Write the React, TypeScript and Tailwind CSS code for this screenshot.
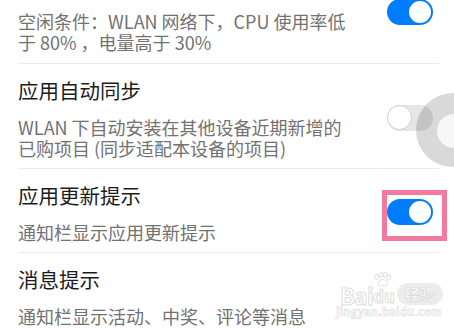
import React from "react";

function Toggle({ on }: { on: boolean }) {
  return on ? (
    <span className="flex h-[26px] w-[46px] items-center justify-end rounded-full bg-[#007dff] px-[2px]">
      <span className="h-[22px] w-[22px] rounded-full bg-white" />
    </span>
  ) : (
    <span className="flex h-[26px] w-[46px] items-center rounded-full bg-[#e6e6e6]">
      <span className="h-[25px] w-[25px] rounded-full border border-[#cfcfcf] bg-white" />
    </span>
  );
}

function Lines({ lines }: { lines: string[] }) {
  return (
    <div className="text-[18px] leading-[21px] text-[#727272]">
      {lines.map((l) => (
        <div key={l} className="whitespace-nowrap">
          {l}
        </div>
      ))}
    </div>
  );
}

function Row({
  title,
  lines,
  on,
  highlight,
}: {
  title: string;
  lines: string[];
  on?: boolean;
  highlight?: boolean;
}) {
  return (
    <div className="flex items-center border-b border-[#ebebeb] pt-[12px] pb-[9px]">
      <div className="flex flex-1 flex-col gap-[13px]">
        <div className="text-[20.5px] leading-[28px] text-[#1c1c1c]">{title}</div>
        <Lines lines={lines} />
      </div>
      {on !== undefined && (
        <div className="relative mr-[6px] flex">
          {highlight && (
            <span className="absolute -left-[5px] -top-[9px] h-[51px] w-[65px] border-[5px] border-[#f27a9e]" />
          )}
          <Toggle on={on} />
        </div>
      )}
    </div>
  );
}

function Paw() {
  return (
    <svg width="19" height="15" viewBox="0 0 19 15" className="absolute -top-[15px] left-[0px]">
      <g fill="#fff" stroke="#dedede" strokeWidth="1">
        <ellipse cx="4" cy="5" rx="2" ry="2.6" />
        <ellipse cx="8" cy="2.8" rx="2" ry="2.4" />
        <ellipse cx="12" cy="2.8" rx="2" ry="2.4" />
        <ellipse cx="15.5" cy="5.5" rx="2" ry="2.6" />
        <path d="M5 12.5c0-3 2.4-5 4.8-5s4.6 2 4.6 5c0 1.5-1.4 2-2.4 1.5-1.3-.6-3.2-.6-4.4 0C6.4 14.5 5 14 5 12.5z" />
      </g>
    </svg>
  );
}

function Watermark() {
  return (
    <div className="pointer-events-none absolute left-[340px] top-[283px] flex select-none flex-col items-start">
      <div className="flex items-end">
        <span className="text-[22px] font-bold leading-[20px] tracking-tight text-white [-webkit-text-stroke:1px_#dedede]">
          Bai
        </span>
        <span className="relative text-[17px] font-bold leading-[18px] text-white [-webkit-text-stroke:1px_#dedede]">
          <Paw />
          du
        </span>
        <span className="ml-[2px] rounded-full bg-[#ececec] px-[8px] text-[15px] font-bold leading-[22px] text-white [-webkit-text-stroke:0.6px_#d8d8d8]">
          经验
        </span>
      </div>
      <span className="-ml-[4px] text-[11px] font-bold leading-[12px] tracking-[0.3px] text-white [-webkit-text-stroke:0.6px_#dcdcdc]">
        jingyan.baidu.com
      </span>
    </div>
  );
}

export default function App() {
  return (
    <div
      className="relative h-[330px] w-[454px] overflow-hidden bg-white"
      style={{ fontFamily: '"Noto Sans CJK SC", "Noto Sans", sans-serif' }}
    >
      <div className="ml-[18px] mr-[15px]">
        {/* first row is scrolled, only its summary shows */}
        <div className="flex items-start border-b border-[#ebebeb]">
          <div className="flex-1 pt-[11px] pb-[10px]">
            <Lines lines={["空闲条件：WLAN 网络下，CPU 使用率低", "于 80% ，电量高于 30%"]} />
          </div>
          <div className="mr-[6px] -mt-[1px] flex">
            <Toggle on />
          </div>
        </div>
        <Row
          title="应用自动同步"
          lines={["WLAN 下自动安装在其他设备近期新增的", "已购项目 (同步适配本设备的项目)"]}
          on={false}
        />
        <Row title="应用更新提示" lines={["通知栏显示应用更新提示"]} on highlight />
        <Row title="消息提示" lines={["通知栏显示活动、中奖、评论等消息"]} />
      </div>

      {/* touch ripple */}
      <span className="pointer-events-none absolute left-[416px] top-[93px] h-[74px] w-[74px] rounded-full bg-black/15" />
      <span className="pointer-events-none absolute left-[437px] top-[114px] h-[34px] w-[34px] rounded-full bg-[#f7f7f7]" />

      <Watermark />
    </div>
  );
}
